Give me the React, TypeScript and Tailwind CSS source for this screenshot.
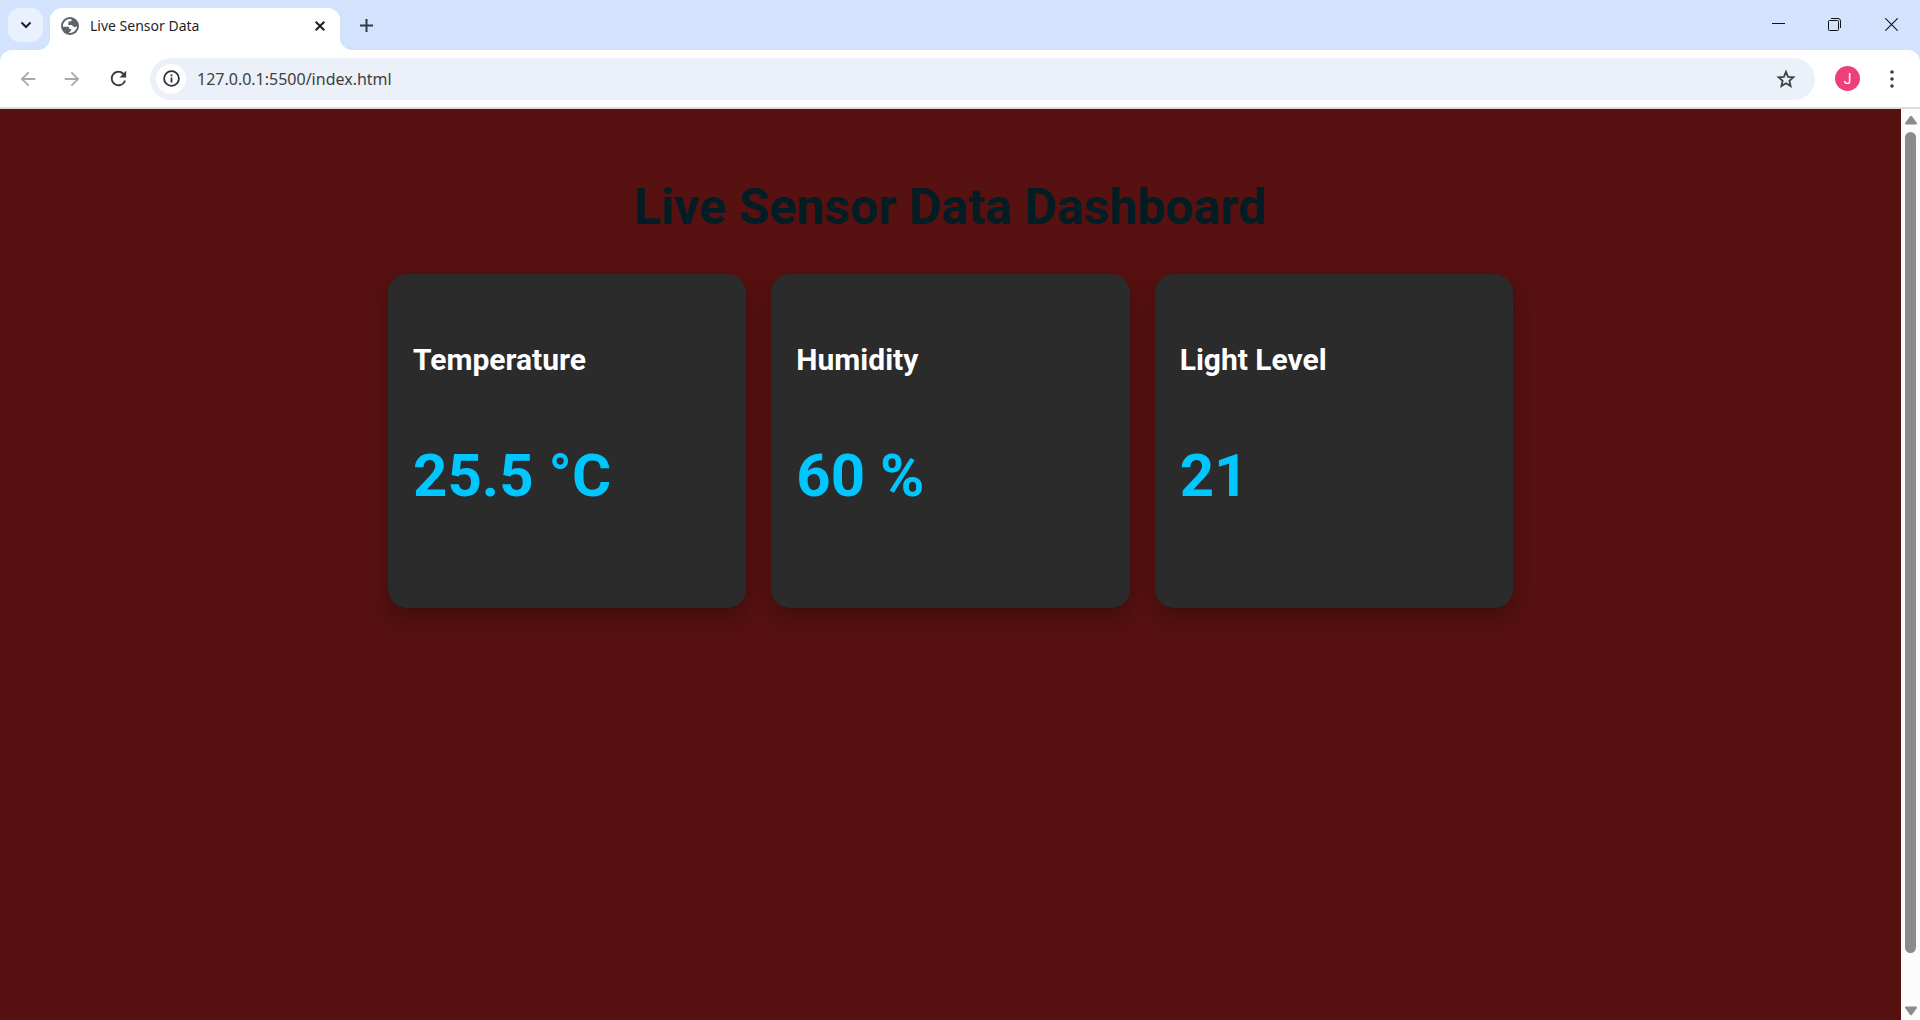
import React from "react";
import { MdArrowBack, MdArrowForward, MdRefresh } from "react-icons/md";

const readings = [
  { label: "Temperature", value: "25.5 °C" },
  { label: "Humidity", value: "60 %" },
  { label: "Light Level", value: "21" },
];

function Globe() {
  return (
    <svg className="size-[18px] shrink-0" viewBox="0 0 18 18" aria-hidden="true">
      <circle cx="9" cy="9" r="9" fill="#5f6368" />
      <path
        d="M10.500 2.200C7 1.600 3.600 3.600 2.400 6.600c-.5 1.400-.5 2.300-.4 3.100h4.700c.9 0 1.500.6 1.500 1.400v.8h1.900v1.700l-2.400 2.300c2.600.4 5.300-.7 6.900-2.900 1-1.400 1.400-2.600 1.400-3.900l-1.500.8c-.9.4-2 .2-2.600-.6l-.9-1.300H7.300V5.800c0-.9.6-1.500 1.500-1.500h1.700z"
        fill="#fff"
      />
    </svg>
  );
}

function Info() {
  return (
    <svg className="size-[17px]" viewBox="0 0 17 17" fill="none" stroke="#303236" strokeWidth="1.800" aria-hidden="true">
      <circle cx="8.500" cy="8.500" r="7.400" />
      <path d="M8.500 7.500v5M8.500 4.400v1.900" />
    </svg>
  );
}

function Star() {
  return (
    <svg className="size-5" viewBox="0 0 20 20" fill="none" stroke="#3f4246" strokeWidth="1.800" aria-hidden="true">
      <path d="m10 2.900 2.100 4.900 5.300.5-4 3.500 1.200 5.200L10 14.200 5.400 17l1.200-5.200-4-3.500 5.300-.5z" />
    </svg>
  );
}

function Dots() {
  return (
    <svg className="h-[18px] w-1" viewBox="0 0 4 18" fill="#3a3d41" aria-hidden="true">
      <circle cx="2" cy="2" r="1.800" />
      <circle cx="2" cy="9" r="1.800" />
      <circle cx="2" cy="16" r="1.800" />
    </svg>
  );
}

function TabStrip() {
  return (
    <div className="flex h-[50px] items-end bg-[#d3e2fd]">
      <button
        aria-label="Search tabs"
        className="mb-2 ml-2 flex h-[34px] w-[35px] shrink-0 items-center justify-center rounded-xl bg-[#eaf1fe]"
      >
        <svg className="h-2 w-3" viewBox="0 0 12 8" fill="none" stroke="#1f1f1f" strokeWidth="2" aria-hidden="true">
          <path d="M1.500 1.500 6 6l4.500-4.500" />
        </svg>
      </button>
      <div className="relative ml-[7px] flex h-[42px] w-[290px] items-center rounded-t-xl bg-white pb-1.5 pl-[11px] pr-[10px]">
        <span className="absolute -left-3 bottom-0 size-3 bg-[radial-gradient(circle_at_0_0,#d3e2fd_12px,#ffffff_12px)]" />
        <span className="absolute -right-3 bottom-0 size-3 bg-[radial-gradient(circle_at_100%_0,#d3e2fd_12px,#ffffff_12px)]" />
        <Globe />
        <span className="ml-[11px] flex-1 font-['Noto_Sans',sans-serif] text-sm text-[#1f1f1f]">Live Sensor Data</span>
        <button aria-label="Close tab" className="flex size-5 items-center justify-center">
          <svg className="size-[10px]" viewBox="0 0 10 10" stroke="#1f1f1f" strokeWidth="2" aria-hidden="true">
            <path d="M.7.7 9.300 9.300M9.300.7.7 9.300" />
          </svg>
        </button>
      </div>
      <button aria-label="New tab" className="mb-3 ml-[13px] flex size-[26px] items-center justify-center">
        <svg className="size-[13px]" viewBox="0 0 13 13" stroke="#333b45" strokeWidth="2" aria-hidden="true">
          <path d="M6.500 0v13M0 6.500h13" />
        </svg>
      </button>
      <div className="ml-auto flex h-full items-start">
        <button aria-label="Minimize" className="flex h-12 w-14 items-center justify-center">
          <svg className="size-[13px]" viewBox="0 0 13 13" stroke="#111" aria-hidden="true">
            <path d="M0 5.500h13" />
          </svg>
        </button>
        <button aria-label="Restore" className="flex h-12 w-14 items-center justify-center">
          <svg className="size-[13px]" viewBox="0 0 13 13" fill="none" stroke="#111" aria-hidden="true">
            <rect x=".5" y="2.500" width="10" height="10" rx="1" />
            <path d="M3 .5h7a2.500 2.500 0 0 1 2.500 2.500v7" />
          </svg>
        </button>
        <button aria-label="Close window" className="flex h-12 w-[58px] items-center justify-center">
          <svg className="size-[13px]" viewBox="0 0 13 13" stroke="#111" strokeWidth="1.100" aria-hidden="true">
            <path d="m.3.3 12.400 12.400M12.700.3.3 12.700" />
          </svg>
        </button>
      </div>
    </div>
  );
}

function Toolbar() {
  return (
    <div className="bg-[#d3e2fd]">
      <div className="flex h-[59px] items-center rounded-t-xl border-b-2 border-[#dddddd] bg-white pl-1.5 pr-4">
        <button aria-label="Back" className="flex size-11 items-center justify-center text-[#a9a9a9]">
          <MdArrowBack size={22} />
        </button>
        <button aria-label="Forward" className="flex size-11 items-center justify-center text-[#a9a9a9]">
          <MdArrowForward size={22} />
        </button>
        <button aria-label="Reload" className="flex size-12 items-center justify-center text-[#3a3d41]">
          <MdRefresh size={23} />
        </button>
        <form
          className="ml-2 flex h-[42px] flex-1 items-center rounded-full bg-[#ebf0f9] pl-1.5 pr-[19px]"
          onSubmit={(e) => e.preventDefault()}
        >
          <button
            type="button"
            aria-label="View site information"
            className="flex size-[30px] items-center justify-center rounded-full bg-white"
          >
            <Info />
          </button>
          <input
            aria-label="Address"
            defaultValue="127.0.0.1:5500/index.html"
            className="ml-[11px] min-w-0 flex-1 bg-transparent font-['Noto_Sans',sans-serif] text-base text-[#404040] outline-none"
          />
          <button type="button" aria-label="Bookmark this page">
            <Star />
          </button>
        </form>
        <button
          aria-label="Profile J"
          className="ml-5 flex size-[25px] items-center justify-center rounded-full bg-[#ec407a] font-['Roboto',sans-serif] text-sm text-white"
        >
          J
        </button>
        <button aria-label="Menu" className="ml-5 flex size-6 items-center justify-center">
          <Dots />
        </button>
      </div>
    </div>
  );
}

function Scrollbar() {
  return (
    <div className="flex w-[19px] shrink-0 flex-col items-center bg-[#fcfcfc] pt-[5px] pb-[3px]" aria-hidden="true">
      <svg className="h-3 w-3" viewBox="0 0 12 12" fill="#8b8b8b">
        <path d="M5 2.300a1.300 1.300 0 0 1 2 0l4.700 6.500c.5.800.1 1.700-.9 1.700H1.200c-1 0-1.400-.9-.9-1.700z" />
      </svg>
      <div className="mt-1.5 mb-[52px] w-[11px] flex-1 rounded-full bg-[#8b8b8b]" />
      <svg className="h-3 w-3" viewBox="0 0 12 12" fill="#8b8b8b">
        <path d="M5 9.700a1.300 1.300 0 0 0 2 0l4.700-6.500c.5-.8.1-1.700-.9-1.700H1.200c-1 0-1.400.9-.9 1.700z" />
      </svg>
    </div>
  );
}

export default function App() {
  return (
    <div className="flex min-h-screen flex-col">
      <header>
        <TabStrip />
        <Toolbar />
      </header>
      <div className="flex flex-1">
        <main className="flex-1 bg-[#561110] px-6 pt-[68px] font-['Roboto',sans-serif]">
          <h1 className="text-center text-[50px] leading-[60px] font-bold text-[#031d24]">Live Sensor Data Dashboard</h1>
          <div className="mx-auto mt-[37px] grid max-w-[1125px] grid-cols-3 gap-[25px]">
            {readings.map((r) => (
              <section
                key={r.label}
                className="rounded-[19px] bg-[#2b2b2b] px-[25px] pt-[68px] pb-24 shadow-[0_10px_20px_rgba(0,0,0,0.25)]"
              >
                <h2 className="text-[30px] leading-9 font-bold text-white">{r.label}</h2>
                <p className="mt-[62px] text-[60px] leading-[72px] font-bold text-[#00c6ff]">{r.value}</p>
              </section>
            ))}
          </div>
        </main>
        <Scrollbar />
      </div>
    </div>
  );
}
